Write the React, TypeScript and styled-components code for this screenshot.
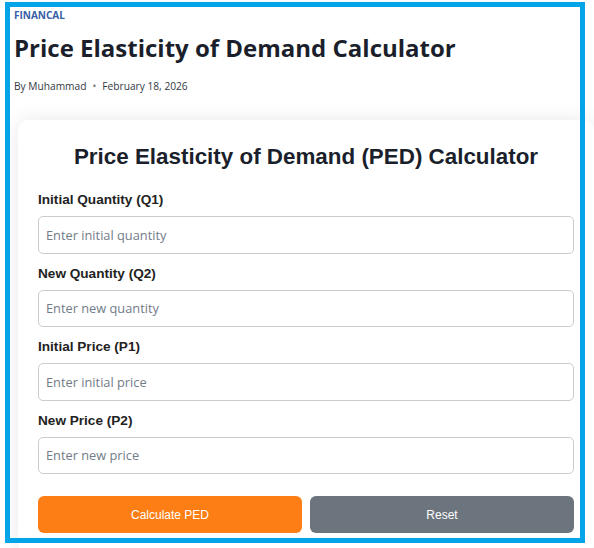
import styled, { createGlobalStyle } from "styled-components";

const GlobalStyle = createGlobalStyle`
    html, body {
        margin: 0;
        padding: 0;
        overflow: hidden;
        background: #ffffff;
    }

    * {
        box-sizing: border-box;
    }
`;

const Page = styled.div`
    padding: 8px 0 0 14px;
    font-family: "Open Sans", "Noto Sans", sans-serif;
`;

const Category = styled.div`
    font-size: 10px;
    line-height: 14px;
    font-weight: 700;
    color: #3760a6;
    text-transform: uppercase;
`;

const Title = styled.h1`
    margin: 11px 0 0;
    font-size: 24px;
    line-height: 30px;
    font-weight: 700;
    color: #1b1f2b;
`;

const Byline = styled.div`
    margin-top: 15px;
    font-size: 10.2px;
    line-height: 16px;
    color: #333842;

    span {
        margin: 0 6px;
        color: #777;
    }
`;

const Card = styled.div`
    margin: 26px 0 0 4px;
    width: calc(100% - 4px);
    padding: 24px 20px 20px;
    background: #ffffff;
    border-radius: 10px;
    box-shadow: 0 0 20px rgba(0, 0, 0, 0.09);
    font-family: "Liberation Sans", Arial, sans-serif;
`;

const CardTitle = styled.h2`
    margin: 0 0 22px;
    text-align: center;
    font-size: 22.4px;
    line-height: 26px;
    font-weight: 700;
    color: #1b1f2b;
`;

const Field = styled.div`
    margin-bottom: 12px;
`;

const Label = styled.label`
    display: block;
    margin-bottom: 8px;
    font-size: 13.6px;
    line-height: 16px;
    font-weight: 700;
    color: #222;
`;

const Input = styled.input`
    display: block;
    width: 100%;
    height: 37.5px;
    padding: 0 7px;
    border: 1px solid #cccccc;
    border-radius: 5px;
    font-family: "Open Sans", "Noto Sans", sans-serif;
    font-size: 12.8px;
    color: #222;
    outline: none;

    &::placeholder {
        color: #737b88;
    }
`;

const Actions = styled.div`
    display: flex;
    gap: 8px;
    margin-top: 22px;
`;

const Button = styled.button<{ $tone: "primary" | "secondary" }>`
    flex: 1;
    height: 37px;
    border: none;
    border-radius: 6px;
    background: ${(p) => (p.$tone === "primary" ? "#fd7e14" : "#6c757d")};
    color: #ffffff;
    font-family: "Liberation Sans", Arial, sans-serif;
    font-size: 12px;
    cursor: pointer;
`;

const Frame = styled.div`
    position: fixed;
    left: 5px;
    top: 2px;
    width: 580px;
    height: 541px;
    border: 5px solid #03a4e8;
    pointer-events: none;
`;

const fields = [
    { id: "q1", label: "Initial Quantity (Q1)", placeholder: "Enter initial quantity" },
    { id: "q2", label: "New Quantity (Q2)", placeholder: "Enter new quantity" },
    { id: "p1", label: "Initial Price (P1)", placeholder: "Enter initial price" },
    { id: "p2", label: "New Price (P2)", placeholder: "Enter new price" },
];

export default function App() {
    return (
        <>
            <GlobalStyle />
            <Page>
                <Category>Financal</Category>
                <Title>Price Elasticity of Demand Calculator</Title>
                <Byline>
                    By Muhammad<span>•</span>February 18, 2026
                </Byline>

                <Card>
                    <CardTitle>Price Elasticity of Demand (PED) Calculator</CardTitle>
                    {fields.map((f) => (
                        <Field key={f.id}>
                            <Label htmlFor={f.id}>{f.label}</Label>
                            <Input id={f.id} type="number" placeholder={f.placeholder} />
                        </Field>
                    ))}
                    <Actions>
                        <Button $tone="primary">Calculate PED</Button>
                        <Button $tone="secondary">Reset</Button>
                    </Actions>
                </Card>
            </Page>
            <Frame />
        </>
    );
}
